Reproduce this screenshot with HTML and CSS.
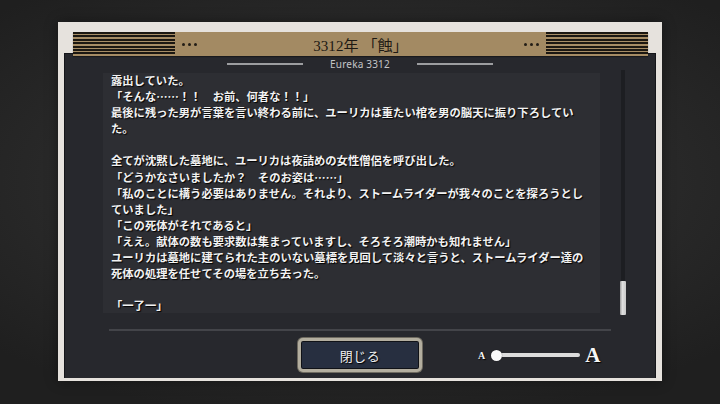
FILE: index.html
```html
<!DOCTYPE html>
<html lang="ja">
<head>
<meta charset="utf-8">
<link rel="stylesheet" href="styles.css">
</head>
<body>
<div class="frame">
  <div class="header">
    <div class="stripes"></div>
    <div class="dots"><i></i><i></i><i></i></div>
    <div class="title">3312年 「蝕」</div>
    <div class="dots"><i></i><i></i><i></i></div>
    <div class="stripes"></div>
  </div>
  <div class="panel">
    <div class="subtitle"><span class="rule"></span><span class="sub">Eureka 3312</span><span class="rule"></span></div>
    <div class="body">
      <div class="textbox">
        <div class="text">
          <p>露出していた。</p>
          <p>「そんな……！！　お前、何者な！！」</p>
          <p>最後に残った男が言葉を言い終わる前に、ユーリカは重たい棺を男の脳天に振り下ろしてい</p>
          <p>た。</p>
          <p>&nbsp;</p>
          <p>全てが沈黙した墓地に、ユーリカは夜詰めの女性僧侶を呼び出した。</p>
          <p>「どうかなさいましたか？　そのお姿は……」</p>
          <p>「私のことに構う必要はありません。それより、ストームライダーが我々のことを探ろうとし</p>
          <p>ていました」</p>
          <p>「この死体がそれであると」</p>
          <p>「ええ。献体の数も要求数は集まっていますし、そろそろ潮時かも知れません」</p>
          <p>ユーリカは墓地に建てられた主のいない墓標を見回して淡々と言うと、ストームライダー達の</p>
          <p>死体の処理を任せてその場を立ち去った。</p>
          <p>&nbsp;</p>
          <p>「一了一」</p>
        </div>
      </div>
      <div class="scroll"><div class="thumb"></div></div>
    </div>
    <div class="sep"></div>
    <div class="bottom">
      <button class="close">閉じる</button>
      <div class="slider">
        <span class="a-small">A</span>
        <div class="track"><span class="knob"></span></div>
        <span class="a-big">A</span>
      </div>
    </div>
  </div>
</div>
</body>
</html>
```
FILE: styles.css
```css
html, body {
  margin: 0;
  padding: 0;
}
body {
  width: 720px;
  height: 404px;
  overflow: hidden;
  background: radial-gradient(ellipse 70% 60% at 50% 45%, #343434 0%, #2a2a2a 55%, #1f1f1f 100%);
  font-family: "Noto Sans CJK JP", "Noto Sans", sans-serif;
}
.frame {
  box-sizing: border-box;
  margin: 22px 0 0 58px;
  width: 604px;
  height: 359px;
  background: #e6e2dd;
  padding: 10px 6px 3px 6px;
  display: flex;
  flex-direction: column;
  box-shadow: 0 0 12px rgba(0,0,0,0.4);
}
.header {
  position: relative;
  z-index: 1;
  height: 24px;
  margin: 0 8px -3px 9px;
  background: #a38a63;
  display: flex;
  align-items: center;
  box-shadow: 0 1px 1px rgba(0,0,0,0.35);
}
.stripes {
  width: 102px;
  height: 100%;
  background: repeating-linear-gradient(to bottom, #1b1711 0px, #1b1711 2px, #a68c64 2px, #a68c64 3.4px);
}
.dots {
  display: flex;
  gap: 3px;
  margin: 0 7px;
}
.dots i {
  width: 3px;
  height: 3px;
  border-radius: 50%;
  background: #221d16;
}
.title {
  flex: 1;
  text-align: center;
  font-family: "Liberation Serif", "Noto Sans CJK JP", serif;
  font-size: 15px;
  color: #1d1913;
  letter-spacing: 0.1px;
}
.panel {
  flex: 1;
  background: #27282d;
  border: 1px solid #15161a;
  border-bottom: 0;
  display: flex;
  flex-direction: column;
  min-height: 0;
}
.subtitle {
  height: 19px;
  display: flex;
  align-items: center;
  justify-content: center;
  gap: 27px;
}
.rule {
  width: 76px;
  height: 2px;
  background: #9c9da0;
}
.sub {
  font-family: "Noto Sans", sans-serif;
  font-size: 10px;
  color: #c4c5c8;
  letter-spacing: 0.2px;
}
.body {
  display: flex;
  margin-left: 38px;
  height: 240px;
}
.textbox {
  width: 497px;
  height: 240px;
  background: #2d2e33;
  overflow: hidden;
}
.text {
  margin-top: -1px;
  padding-left: 8px;
  font-size: 11.3px;
  line-height: 16.1px;
  color: #f2f2f2;
  font-weight: 700;
  text-shadow: 1px 1px 1px #000;
  white-space: nowrap;
}
.text p {
  margin: 0;
}
.scroll {
  position: relative;
  margin: -3px 0 0 21px;
  width: 4px;
  height: 245px;
  background: #1d1e22;
}
.thumb {
  position: absolute;
  left: -1px;
  bottom: 0;
  width: 6px;
  height: 34px;
  border-radius: 1px;
  background: linear-gradient(to right, #9a9a9a, #e0e0e0 40%, #c8c8c8);
}
.sep {
  margin: 16px 44px 0 44px;
  height: 2px;
  background: #434449;
}
.bottom {
  display: flex;
  align-items: center;
  margin-top: 7px;
  padding-left: 233px;
}
.close {
  box-sizing: border-box;
  width: 124px;
  height: 34px;
  border-radius: 5px;
  border: 3px solid #b3ae9f;
  background: #272f40;
  box-shadow: inset 0 0 0 1px #101217, 0 0 0 1px #6e6a60;
  color: #f0f0f0;
  font-family: "Noto Sans CJK JP", sans-serif;
  font-size: 13px;
  text-shadow: 1px 1px 1px #000;
  padding: 0;
  letter-spacing: 0.5px;
}
.slider {
  display: flex;
  align-items: center;
  margin-left: 56px;
}
.a-small {
  font-family: "Liberation Serif", serif;
  font-weight: 700;
  font-size: 10px;
  color: #f4f4f4;
  text-shadow: 1px 1px 1px #000;
  margin-right: 11px;
}
.track {
  position: relative;
  width: 84px;
  height: 4px;
  border-radius: 2px;
  background: #dcdcdc;
}
.knob {
  position: absolute;
  left: -5px;
  top: -3.5px;
  width: 11px;
  height: 11px;
  border-radius: 50%;
  background: #fafafa;
  box-shadow: 0 0 1px rgba(0,0,0,0.6);
}
.a-big {
  font-family: "Liberation Serif", serif;
  font-weight: 700;
  font-size: 21px;
  line-height: 20px;
  color: #f6f6f6;
  text-shadow: 1px 1px 1px #000;
  margin-left: 5px;
}
```
